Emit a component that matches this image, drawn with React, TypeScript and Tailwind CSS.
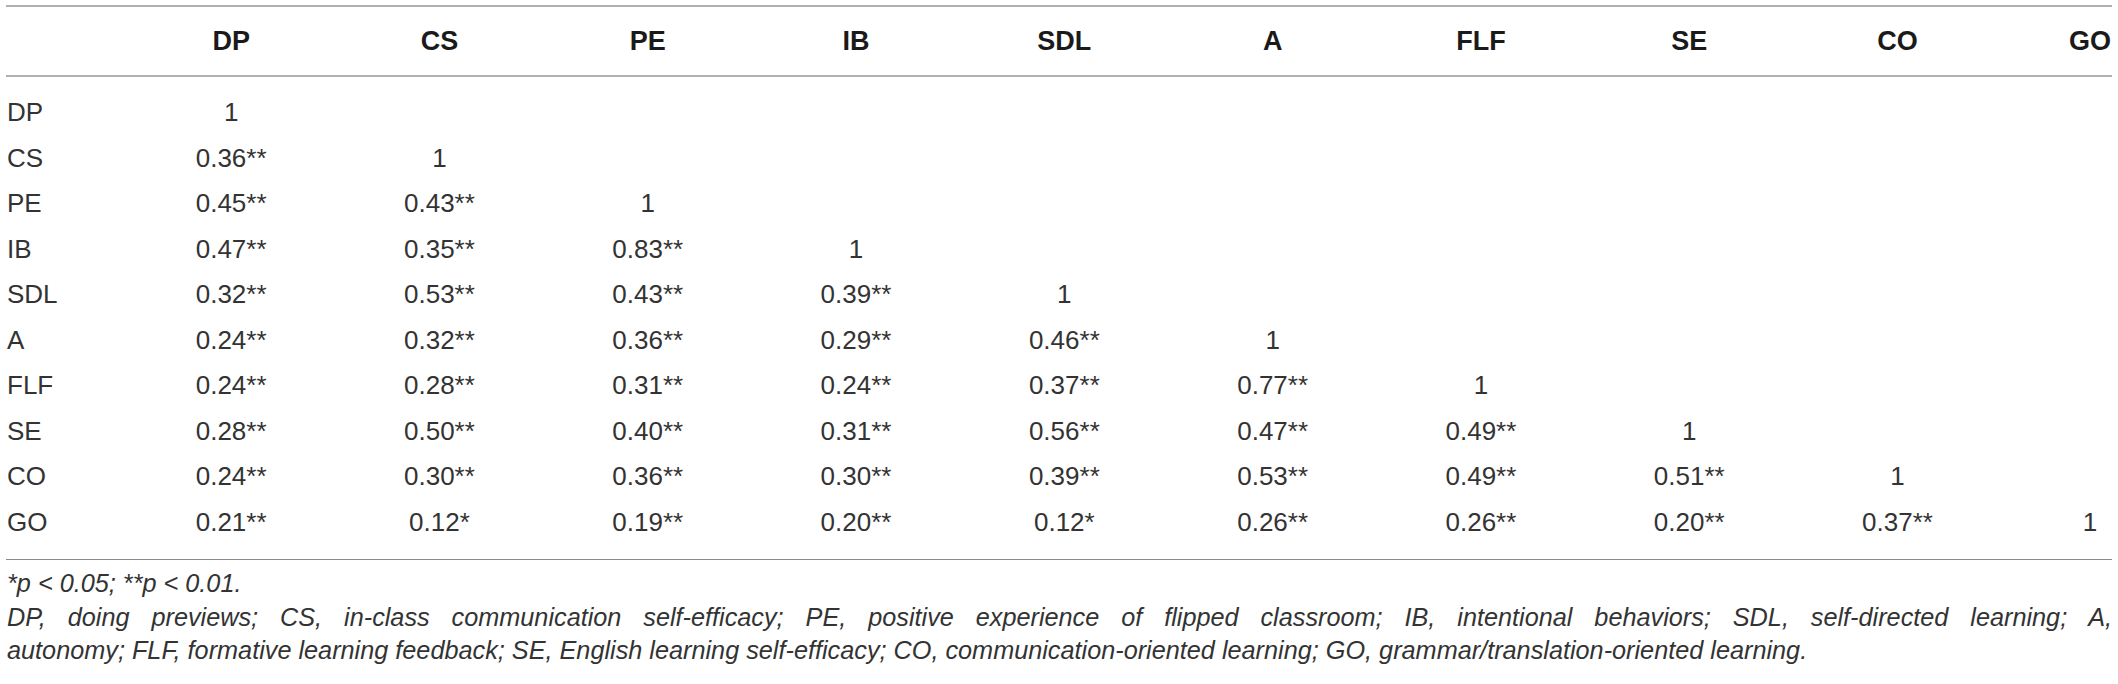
import React from "react";

const cols = ["DP", "CS", "PE", "IB", "SDL", "A", "FLF", "SE", "CO", "GO"];

const rows: string[][] = [
  ["1"],
  ["0.36**", "1"],
  ["0.45**", "0.43**", "1"],
  ["0.47**", "0.35**", "0.83**", "1"],
  ["0.32**", "0.53**", "0.43**", "0.39**", "1"],
  ["0.24**", "0.32**", "0.36**", "0.29**", "0.46**", "1"],
  ["0.24**", "0.28**", "0.31**", "0.24**", "0.37**", "0.77**", "1"],
  ["0.28**", "0.50**", "0.40**", "0.31**", "0.56**", "0.47**", "0.49**", "1"],
  ["0.24**", "0.30**", "0.36**", "0.30**", "0.39**", "0.53**", "0.49**", "0.51**", "1"],
  ["0.21**", "0.12*", "0.19**", "0.20**", "0.12*", "0.26**", "0.26**", "0.20**", "0.37**", "1"],
];

function Cell({ children, last }: { children?: React.ReactNode; last?: boolean }) {
  if (last) {
    return (
      <div className="flex items-center justify-end">
        <span className="inline-block w-[44px] text-center">{children}</span>
      </div>
    );
  }
  return <div className="flex items-center justify-center">{children}</div>;
}

export default function App() {
  const grid = "grid grid-cols-[121px_repeat(9,208.3px)_1fr]";
  return (
    <div
      className="w-[2118px] h-[684px] bg-white px-[6px] pt-[5px] text-[#333333]"
      style={{ fontFamily: '"Liberation Sans", Arial, sans-serif' }}
    >
      <div className="border-t-2 border-b-2 border-[#b0b0b0]">
        <div className={`${grid} h-[68px] text-[27px] font-bold text-[#1a1a1a]`}>
          <div />
          {cols.map((c, i) => (
            <Cell key={c} last={i === cols.length - 1}>
              {c}
            </Cell>
          ))}
        </div>
      </div>
      <div className="border-b border-[#8a8a8a] pt-[13px] pb-[14px] text-[26px]">
        {rows.map((r, ri) => (
          <div key={ri} className={`${grid} h-[45.5px]`}>
            <div className="flex items-center pl-[1px]">{cols[ri]}</div>
            {cols.map((_, ci) => (
              <Cell key={ci} last={ci === cols.length - 1}>
                {r[ci] ?? null}
              </Cell>
            ))}
          </div>
        ))}
      </div>
      <div className="pt-[7px] pl-[1px] text-[25.25px] italic leading-[33.5px]">
        <div>*p &lt; 0.05; **p &lt; 0.01.</div>
        <div className="text-justify [text-align-last:justify]">
          DP, doing previews; CS, in-class communication self-efficacy; PE, positive experience of flipped classroom; IB,
          intentional behaviors; SDL, self-directed learning; A,
        </div>
        <div>
          autonomy; FLF, formative learning feedback; SE, English learning self-efficacy; CO, communication-oriented
          learning; GO, grammar/translation-oriented learning.
        </div>
      </div>
    </div>
  );
}
